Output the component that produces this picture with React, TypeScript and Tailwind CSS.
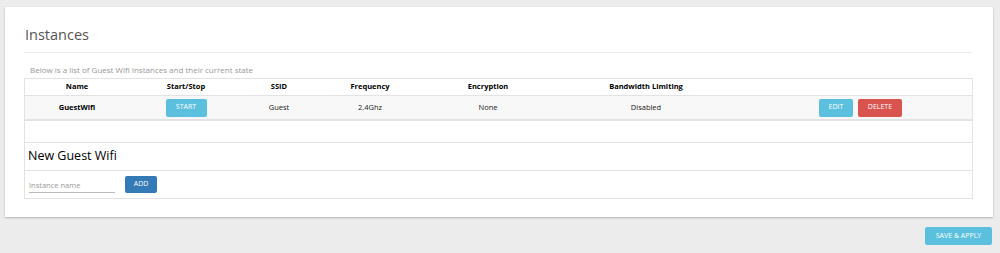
export default function App() {
  const cols = "grid grid-cols-[104px_114px_72px_110px_126px_190px_1fr] items-center";
  return (
    <div
      className="w-[1000px] h-[253px] bg-[#ececec] overflow-hidden pt-[7px] pl-[5px]"
      style={{ fontFamily: "'Open Sans', 'Noto Sans', sans-serif" }}
    >
      <div className="w-[988px] h-[210px] bg-white shadow-[0_1px_2px_rgba(0,0,0,0.25)] px-[19px] pt-[19px]">
        <div className="text-[14.5px] text-[#555] leading-[18px] pl-[1px]">Instances</div>
        <div className="mt-[8px] border-t border-[#eeeeee] w-[948px]" />
        <div className="mt-[12px] pl-[6px] text-[8px] text-[#999] leading-[10px]">
          Below is a list of Guest Wifi Instances and their current state
        </div>
        <div className="mt-[3px] w-[949px] border border-[#e3e3e3]">
          <div className={`${cols} h-[16px] text-[7.5px] font-bold text-black text-center`}>
            <div>Name</div>
            <div>Start/Stop</div>
            <div>SSID</div>
            <div>Frequency</div>
            <div>Encryption</div>
            <div>Bandwidth Limiting</div>
            <div />
          </div>
          <div className={`${cols} h-[26px] bg-[#f8f8f8] border-t border-[#e3e3e3] border-b-2 border-b-[#e3e3e3] text-[7.5px] text-[#222] text-center`}>
            <div className="font-bold text-black">GuestWifi</div>
            <div className="flex justify-center">
              <button className="w-[41px] h-[18px] bg-[#5bc0de] text-white text-[7px] rounded-[2px]">START</button>
            </div>
            <div>Guest</div>
            <div>2.4Ghz</div>
            <div>None</div>
            <div>Disabled</div>
            <div className="flex gap-[5px] pl-[78px]">
              <button className="w-[34px] h-[18px] bg-[#5bc0de] text-white text-[7px] rounded-[2px]">EDIT</button>
              <button className="w-[44px] h-[18px] bg-[#d9534f] text-white text-[7px] rounded-[2px]">DELETE</button>
            </div>
          </div>
          <div className="h-[22px] border-b border-[#e3e3e3]" />
          <div className="h-[28px] border-b border-[#e3e3e3] flex items-center pl-[3px] text-[12.5px] text-black">
            New Guest Wifi
          </div>
          <div className="h-[27px] flex items-center pl-[4px] gap-[10px]">
            <input
              placeholder="Instance name"
              className="w-[86px] h-[16px] border-b border-[#bbb] text-[7.5px] outline-none placeholder:text-[#999] pt-[2px]"
            />
            <button className="w-[32px] h-[17px] bg-[#337ab7] text-white text-[7px] rounded-[2px]">ADD</button>
          </div>
        </div>
      </div>
      <div className="flex justify-end pr-[8px] mt-[10px]">
        <button className="w-[67px] h-[18px] bg-[#5bc0de] text-white text-[7px] rounded-[2px]">SAVE &amp; APPLY</button>
      </div>
    </div>
  );
}
